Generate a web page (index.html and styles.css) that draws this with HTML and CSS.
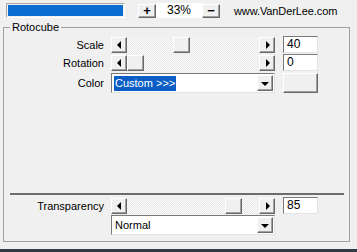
FILE: index.html
```html
<!DOCTYPE html>
<html lang="en">
<head>
    <meta charset="UTF-8">
    <title>Rotocube</title>
    <link rel="stylesheet" href="styles.css">
</head>
<body>
    <div class="topbar">
        <div class="progress"><div class="progress-fill"></div></div>
        <button class="btn zoom-btn">+</button>
        <div class="zoom-value">33%</div>
        <button class="btn zoom-btn">&minus;</button>
        <span class="site">www.VanDerLee.com</span>
    </div>

    <fieldset class="group">
        <legend>Rotocube</legend>

        <div class="row">
            <label>Scale</label>
            <div class="scrollbar">
                <span class="btn arrow"><i class="tri-left"></i></span>
                <div class="track"><span class="btn thumb" style="margin-left: 46px"></span></div>
                <span class="btn arrow"><i class="tri-right"></i></span>
            </div>
            <div class="edit">40</div>
        </div>

        <div class="row">
            <label>Rotation</label>
            <div class="scrollbar">
                <span class="btn arrow"><i class="tri-left"></i></span>
                <div class="track"><span class="btn thumb" style="margin-left: 0px"></span></div>
                <span class="btn arrow"><i class="tri-right"></i></span>
            </div>
            <div class="edit">0</div>
        </div>

        <div class="row row-combo">
            <label>Color</label>
            <div class="combo">
                <span class="combo-text selected">Custom &gt;&gt;&gt;</span>
                <span class="btn drop"><i class="tri-down"></i></span>
            </div>
            <span class="btn swatch"></span>
        </div>

        <div class="separator"></div>

        <div class="row">
            <label>Transparency</label>
            <div class="scrollbar">
                <span class="btn arrow"><i class="tri-left"></i></span>
                <div class="track"><span class="btn thumb" style="margin-left: 98px"></span></div>
                <span class="btn arrow"><i class="tri-right"></i></span>
            </div>
            <div class="edit">85</div>
        </div>

        <div class="row row-combo row-blend">
            <span></span>
            <div class="combo">
                <span class="combo-text">Normal</span>
                <span class="btn drop"><i class="tri-down"></i></span>
            </div>
        </div>
    </fieldset>

    <div class="taskbar"></div>
</body>
</html>
```

FILE: styles.css
```css
/* classic dialog look */
body {
    margin: 0;
    width: 357px;
    height: 252px;
    overflow: hidden;
    background-color: #f0f0f0;
    font-family: "Liberation Sans", Arial, sans-serif;
    font-size: 11px;
    color: #000;
}

/* raised 3d button */
.btn {
    box-sizing: border-box;
    display: flex;
    justify-content: center;
    align-items: center;
    background-color: #f0f0f0;
    border: 1px solid;
    border-color: #fff #696969 #696969 #fff;
    box-shadow: inset -1px -1px #a0a0a0;
    padding: 0;
    font-family: inherit;
    color: #000;
}

/* --- top bar --- */
.topbar {
    display: flex;
    align-items: center;
    height: 21px;
    padding-left: 6px;
}

.progress {
    box-sizing: border-box;
    width: 119px;
    height: 15px;
    padding: 1px;
    border: 1px solid;
    border-color: #a8a8a8 #fff #fff #a8a8a8;
    margin-right: 13px;
}

.progress-fill {
    height: 100%;
    background-color: #0a6ccf;
}

.zoom-btn {
    width: 18px;
    height: 14px;
    font-size: 13px;
    font-weight: bold;
    line-height: 1;
}

.zoom-value {
    width: 46px;
    height: 15px;
    line-height: 15px;
    background-color: #fff;
    text-align: center;
    font-size: 12px;
}

.site {
    margin-left: 14px;
    font-size: 11px;
    letter-spacing: -0.1px;
}

/* --- group box --- */
.group {
    box-sizing: border-box;
    width: 347px;
    min-width: 0;
    height: 221px;
    margin: 0 0 0 3px;
    padding: 2px 0 0 0;
    border: 1px solid #a0a0a0;
}

.group legend {
    margin-left: 6px;
    padding: 0 2px;
    line-height: 13px;
}

.row {
    display: grid;
    grid-template-columns: 100px 164px 36px;
    column-gap: 7px;
    align-items: center;
    height: 17px;
    margin-bottom: 1px;
}

.row > :nth-child(3) {
    margin-left: 1px;
}

.row label {
    text-align: right;
}

.row-combo {
    height: 20px;
    margin-top: 2px;
}

.row-blend {
    margin-top: 0;
}

/* scroll bar */
.scrollbar {
    display: flex;
    height: 16px;
    margin-top: 1px;
}

.arrow {
    width: 16px;
    height: 16px;
}

.track {
    flex: 1;
    display: flex;
    background: repeating-conic-gradient(#fbfbfb 0 25%, #e8e8e8 0 50%) 0 0 / 2px 2px;
}

.thumb {
    width: 17px;
    height: 16px;
}

.tri-left, .tri-right, .tri-down {
    width: 0;
    height: 0;
    border: 4px solid transparent;
}

.tri-left { border-right-color: #000; border-left-width: 0; margin-left: -1px; }
.tri-right { border-left-color: #000; border-right-width: 0; margin-left: 1px; }
.tri-down { border-top-color: #000; border-bottom-width: 0; margin-top: 1px; }

/* edit field */
.edit {
    box-sizing: border-box;
    height: 17px;
    padding-left: 3px;
    line-height: 15px;
    font-size: 12px;
    background-color: #fff;
    border: 1px solid;
    border-color: #7a7a7a #e3e3e3 #e3e3e3 #7a7a7a;
}

/* combo box */
.combo {
    box-sizing: border-box;
    display: flex;
    align-items: center;
    height: 20px;
    padding: 1px;
    background-color: #fff;
    border: 1px solid;
    border-color: #7a7a7a #e3e3e3 #e3e3e3 #7a7a7a;
}

.combo-text {
    flex: 1;
    padding-left: 2px;
    line-height: 15px;
}

.combo-text.selected {
    flex: none;
    padding: 0 1px;
    margin-left: 1px;
    background-color: #0a5ec4;
    color: #fff;
}

.selected + .drop {
    margin-left: auto;
}

.drop {
    width: 16px;
    height: 16px;
}

.swatch {
    height: 20px;
}

.separator {
    margin: 100px 5px 2px 6px;
    border-top: 2px solid #6c6c6c;
}

.taskbar {
    height: 5px;
    margin-top: 7px;
    background-color: #2f3a45;
}
```
